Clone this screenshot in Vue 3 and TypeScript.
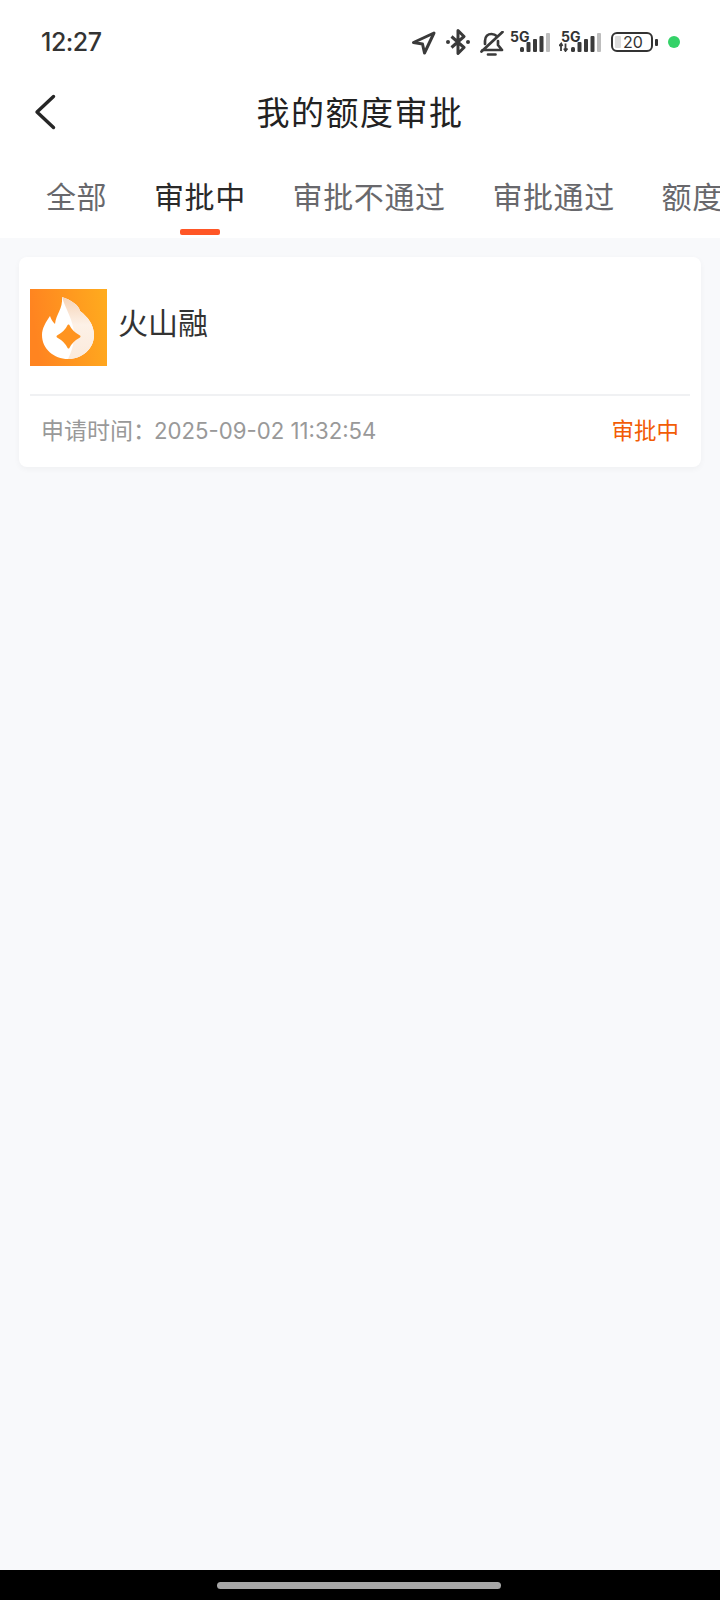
<script setup lang="ts">
const tabs: string[] = ['全部', '审批中', '审批不通过', '审批通过', '额度']
const activeTab = 1
</script>

<template>
  <div class="page">
    <div class="status">
      <span class="time">12:27</span>
      <div class="status-icons">
        <svg class="i-nav" width="25" height="24" viewBox="0 0 25 24"><path d="M23 2 2.500 11.500 11.500 13 13.500 22Z" fill="none" stroke="#3a3a3a" stroke-width="3" stroke-linejoin="round"/></svg>
        <svg class="i-bt" width="24" height="26" viewBox="0 0 24 26"><path d="M5.500 7.500 18 18.500 12 24.500V1.500L18 7.500 5.500 18.500" fill="none" stroke="#3a3a3a" stroke-width="3" stroke-linejoin="round"/><circle cx="2" cy="13" r="2" fill="#3a3a3a"/><circle cx="22" cy="13" r="2" fill="#3a3a3a"/></svg>
        <svg class="i-bell" width="24" height="25" viewBox="0 0 24 25"><path d="M5 13V10C5 5.500 8 3 11.500 3 13.500 3 15.500 3.800 16.800 5.200M18 10V14L22 19H2.500M8 23.500H15.500M1.500 20.500 22.500 1" fill="none" stroke="#3a3a3a" stroke-width="2.700" stroke-linejoin="round" stroke-linecap="round"/></svg>
        <div class="sig first">
          <span class="five-g">5G</span>
          <svg width="30" height="19" viewBox="0 0 30 19"><rect x="0" y="14" width="4" height="5" rx="1.500" fill="#3a3a3a"/><rect x="6.500" y="9" width="4" height="10" rx="1" fill="#3a3a3a"/><rect x="13" y="6" width="4" height="13" rx="1" fill="#3a3a3a"/><rect x="19.500" y="3" width="4" height="16" rx="1" fill="#3a3a3a"/><rect x="26" y="0" width="4" height="19" rx="1" fill="#bdbdbd"/></svg>
        </div>
        <div class="sig second">
          <span class="five-g shifted">5G</span>
          <svg width="42" height="19" viewBox="0 0 42 19"><path d="M2 10.500V18M0 13 2.200 10.500 3.500 13M6.500 10.500V18M5 15.500 6.500 18 8.500 15.500" fill="none" stroke="#3a3a3a" stroke-width="1.800"/><rect x="12" y="14" width="4" height="5" rx="1.500" fill="#3a3a3a"/><rect x="18.500" y="9" width="4" height="10" rx="1" fill="#3a3a3a"/><rect x="25" y="6" width="4" height="13" rx="1" fill="#3a3a3a"/><rect x="31.500" y="3" width="4" height="16" rx="1" fill="#3a3a3a"/><rect x="38" y="0" width="4" height="19" rx="1" fill="#bdbdbd"/></svg>
        </div>
        <div class="battery">
          <div class="cell">
            <span class="level"></span>
            <span class="num">20</span>
          </div>
          <span class="tip"></span>
        </div>
        <span class="dot"></span>
      </div>
    </div>

    <div class="nav">
      <svg class="back" width="24" height="36" viewBox="0 0 24 36"><path d="M20.500 2.500 4 18l16.500 15.500" fill="none" stroke="#262626" stroke-width="3.400" stroke-linecap="round" stroke-linejoin="round"/></svg>
      <h1 class="title">我的额度审批</h1>
    </div>

    <div class="tabs">
      <div v-for="(tab, i) in tabs" :key="tab" class="tab" :class="{ active: i === activeTab }">
        <span class="tab-label">{{ tab }}</span>
        <span class="bar"></span>
      </div>
    </div>

    <main class="content">
      <section class="card">
        <div class="card-head">
          <svg class="logo" width="77" height="77" viewBox="0 0 77 77">
            <defs>
              <linearGradient id="lg" x1="0" y1="0.15" x2="1" y2="0">
                <stop offset="0" stop-color="#ff8420"/>
                <stop offset="1" stop-color="#ffac1e"/>
              </linearGradient>
              <linearGradient id="fl" x1="0" y1="0" x2="0" y2="1">
                <stop offset="0" stop-color="#f6d3b6"/>
                <stop offset="0.45" stop-color="#fdf1e7"/>
                <stop offset="1" stop-color="#fbeadb"/>
              </linearGradient>
            </defs>
            <rect width="77" height="77" fill="url(#lg)"/>
            <path d="M32 8C41 11 49 16 50 22 58 28 64 36 64 46 64 60 52 70 38 70 24 70 12 60 12 46 12 39 16 33 20 27 21 30 22 32 25 35 26 25 33 20 32 8Z" fill="#fff"/>
            <path d="M32 8C41 11 49 16 50 22 58 28 64 36 64 46 64 60 52 70 38 70 44 58 46 46 42 34 40 26 35 18 32 8Z" fill="url(#fl)"/>
            <path d="M38.500 36.500C40.500 41 44 44.500 49.500 47.500 44 50.500 40.500 54 38.500 58.500 36.500 54 33 50.500 27.500 47.500 33 44.500 36.500 41 38.500 36.500Z" fill="#ff9420" stroke="#ff9420" stroke-width="2" stroke-linejoin="round"/>
          </svg>
          <span class="name">火山融</span>
        </div>
        <div class="card-foot">
          <span class="meta"><span class="meta-label">申请时间：</span>2025-09-02 11:32:54</span>
          <span class="state">审批中</span>
        </div>
      </section>
    </main>

    <div class="home-bar"><span class="pill"></span></div>
  </div>
</template>

<style>
html, body { margin: 0; padding: 0; background: #f8f9fb; }
</style>

<style scoped>
.page {
  width: 720px;
  height: 1600px;
  display: flex;
  flex-direction: column;
  background: #fff;
  overflow: hidden;
  font-family: "Noto Sans CJK SC", "Noto Sans", sans-serif;
}
.status {
  height: 84px;
  flex: none;
  display: flex;
  align-items: center;
  justify-content: space-between;
  padding: 0 40px;
  box-sizing: border-box;
}
.time {
  font-family: Inter, "Noto Sans", sans-serif;
  font-size: 25px;
  font-weight: 500;
  letter-spacing: -0.5px;
  color: #333;
  margin-left: 1px;
}
.status-icons { display: flex; align-items: center; }
.i-nav { margin-right: 10px; margin-top: 2px; }
.i-bt { margin-right: 10px; }
.i-bell { margin-right: 6px; margin-top: 2px; }
.sig { position: relative; height: 24px; display: flex; align-items: flex-end; justify-content: flex-end; margin-bottom: 4px; }
.sig.first { width: 40px; margin-right: 9px; }
.sig.second { width: 42px; margin-right: 10px; }
.five-g {
  position: absolute;
  left: 0;
  top: 1px;
  font-family: Inter, sans-serif;
  font-size: 14px;
  font-weight: 700;
  line-height: 15px;
  color: #333;
}
.five-g.shifted { left: 2px; }
.battery { display: flex; align-items: center; margin-right: 10px; }
.cell {
  width: 42px;
  height: 20px;
  border: 2px solid #333;
  border-radius: 6px;
  box-sizing: border-box;
  display: flex;
  align-items: center;
  gap: 2px;
  overflow: hidden;
  padding-left: 2px;
}
.level { flex: none; width: 6px; height: 12px; background: #dcdcdc; border-radius: 1px; }
.num { font-family: Inter, sans-serif; font-size: 16px; line-height: 16px; color: #333; }
.tip { width: 3px; height: 7px; margin-left: 2px; background: #333; border-radius: 1px; }
.dot { width: 12px; height: 12px; border-radius: 50%; background: #34d268; }

.nav {
  height: 52px;
  flex: none;
  display: flex;
  align-items: center;
  justify-content: center;
  position: relative;
}
.back { position: absolute; left: 33px; top: 10px; }
.title {
  margin: 2px 0 0;
  font-size: 33px;
  font-weight: 400;
  letter-spacing: 1.5px;
  line-height: 48px;
  color: #222;
}
.tabs {
  flex: none;
  height: 102px;
  padding-left: 46px;
  display: flex;
  gap: 46.8px;
  overflow: hidden;
  box-sizing: border-box;
}
.tab {
  flex: none;
  display: flex;
  flex-direction: column;
  align-items: center;
  padding-top: 39px;
  box-sizing: border-box;
  height: 102px;
}
.tab-label {
  font-size: 30px;
  letter-spacing: 0.6px;
  line-height: 40px;
  color: #68686c;
}
.bar { width: 40px; height: 6px; margin-top: 14px; border-radius: 2px; background: transparent; }
.tab.active .tab-label { color: #2a2a2a; }
.tab.active .bar { background: #ff5626; }
.content {
  flex: 1;
  background: #f8f9fb;
  padding: 19px 19px 0;
}
.card {
  background: #fff;
  border-radius: 8px;
  box-shadow: 0 2px 6px rgba(0, 0, 0, 0.04);
  padding: 0 11px;
  height: 210px;
  box-sizing: border-box;
}
.card-head {
  height: 139px;
  display: flex;
  align-items: center;
  padding: 32px 0 28px;
  border-bottom: 2px solid #f0f1f3;
  box-sizing: border-box;
  gap: 11px;
}
.name { font-size: 30px; color: #333; margin-bottom: 14px; }
.card-foot {
  display: flex;
  align-items: center;
  justify-content: space-between;
  height: 69px;
  padding: 0 11px 4px 11px;
  box-sizing: border-box;
}
.meta { font-family: Inter, "Noto Sans CJK SC", sans-serif; font-size: 22.200px; color: #999; }
.meta-label { font-size: 23px; margin-right: -2px; }
.state { font-size: 22.500px; color: #f25c05; }
.home-bar {
  flex: none;
  height: 30px;
  background: #000;
  display: flex;
  align-items: center;
  justify-content: center;
}
.pill { width: 284px; height: 7px; border-radius: 4px; background: #a6a6a6; margin-right: 3px; }
</style>
